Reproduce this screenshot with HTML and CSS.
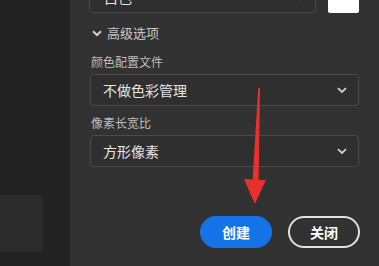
FILE: index.html
```html
<!DOCTYPE html>
<html>
<head>
<meta charset="utf-8">
<link rel="stylesheet" href="styles.css">
</head>
<body>
<div class="sidebar"><div class="sidebar-box"></div></div>
<div class="panel">
  <div class="top-row">
    <div class="select select-top"><span class="select-text">白色</span>
      <svg class="chevron" width="10" height="7" viewBox="0 0 10 7"><path d="M1 1.2 L5 5 L9 1.2" fill="none" stroke="#cfcfcf" stroke-width="1.8"/></svg>
    </div>
    <div class="swatch"></div>
  </div>
  <div class="advanced">
    <svg class="adv-chevron" width="10" height="7" viewBox="0 0 10 7"><path d="M1 1.2 L5 5 L9 1.2" fill="none" stroke="#d0d0d0" stroke-width="2"/></svg>
    <span>高级选项</span>
  </div>
  <div class="label label-first">颜色配置文件</div>
  <div class="select"><span class="select-text">不做色彩管理</span>
    <svg class="chevron" width="10" height="7" viewBox="0 0 10 7"><path d="M1 1.2 L5 5 L9 1.2" fill="none" stroke="#cfcfcf" stroke-width="1.8"/></svg>
  </div>
  <div class="label">像素长宽比</div>
  <div class="select"><span class="select-text">方形像素</span>
    <svg class="chevron" width="10" height="7" viewBox="0 0 10 7"><path d="M1 1.2 L5 5 L9 1.2" fill="none" stroke="#cfcfcf" stroke-width="1.8"/></svg>
  </div>
  <div class="buttons">
    <button class="btn btn-primary">创建</button>
    <button class="btn btn-outline">关闭</button>
  </div>
</div>
<svg class="arrow" width="379" height="266" viewBox="0 0 379 266">
  <polygon points="258.2,88 260,88 258.6,180 266,180 254.8,204 244,179 252.6,179.5" fill="#e8302c"/>
</svg>
</body>
</html>
```
FILE: styles.css
```css
html, body {
  margin: 0;
  padding: 0;
}
body {
  width: 379px;
  height: 266px;
  overflow: hidden;
  background: #323232;
  display: flex;
  position: relative;
  font-family: "Noto Sans CJK SC", "Noto Sans", sans-serif;
}
.sidebar {
  width: 70px;
  flex-shrink: 0;
  background: #232323;
}
.sidebar-box {
  margin-top: 195px;
  width: 43px;
  height: 57px;
  background: #2b2b2b;
}
.panel {
  flex: 1;
  padding: 0 20px 0 20px;
  display: flex;
  flex-direction: column;
}
.top-row {
  display: flex;
  gap: 12px;
  margin-top: -19px;
  height: 32px;
}
.select {
  height: 32px;
  box-sizing: border-box;
  border: 1px solid #4a4a4a;
  border-radius: 4px;
  background: #2f2f2f;
  display: flex;
  align-items: center;
  padding: 0 10px 0 12px;
  color: #e6e6e6;
  font-size: 14px;
}
.select-top {
  flex: 1;
  margin-left: -1px;
  padding-left: 14px;
}
.select-text {
  flex: 1;
  line-height: 20px;
}
.swatch {
  width: 31px;
  height: 32px;
  background: #ffffff;
  border-radius: 2px;
}
.advanced {
  margin-top: 10px;
  height: 20px;
  display: flex;
  align-items: center;
  gap: 5px;
  color: #c8c8c8;
  font-size: 13px;
  line-height: 20px;
  padding-left: 2px;
}
.label {
  margin-top: 9px;
  height: 16px;
  line-height: 16px;
  font-size: 12px;
  color: #bdbdbd;
  margin-bottom: 4px;
  padding-left: 1px;
}
.label-first {
  margin-top: 11px;
}
.chevron {
  margin-right: 1px;
}
.buttons {
  margin-top: 49px;
  display: flex;
  justify-content: flex-end;
  gap: 16px;
  margin-right: -1px;
}
.btn {
  width: 72px;
  height: 32px;
  border-radius: 16px;
  font-family: "Noto Sans CJK SC", sans-serif;
  font-size: 14px;
  font-weight: bold;
  color: #ffffff;
  padding: 0;
  box-sizing: border-box;
}
.btn-primary {
  background: #1473e6;
  border: none;
}
.btn-outline {
  background: transparent;
  border: 2px solid #e1e1e1;
}
.arrow {
  position: absolute;
  left: 0;
  top: 0;
  pointer-events: none;
}
```
